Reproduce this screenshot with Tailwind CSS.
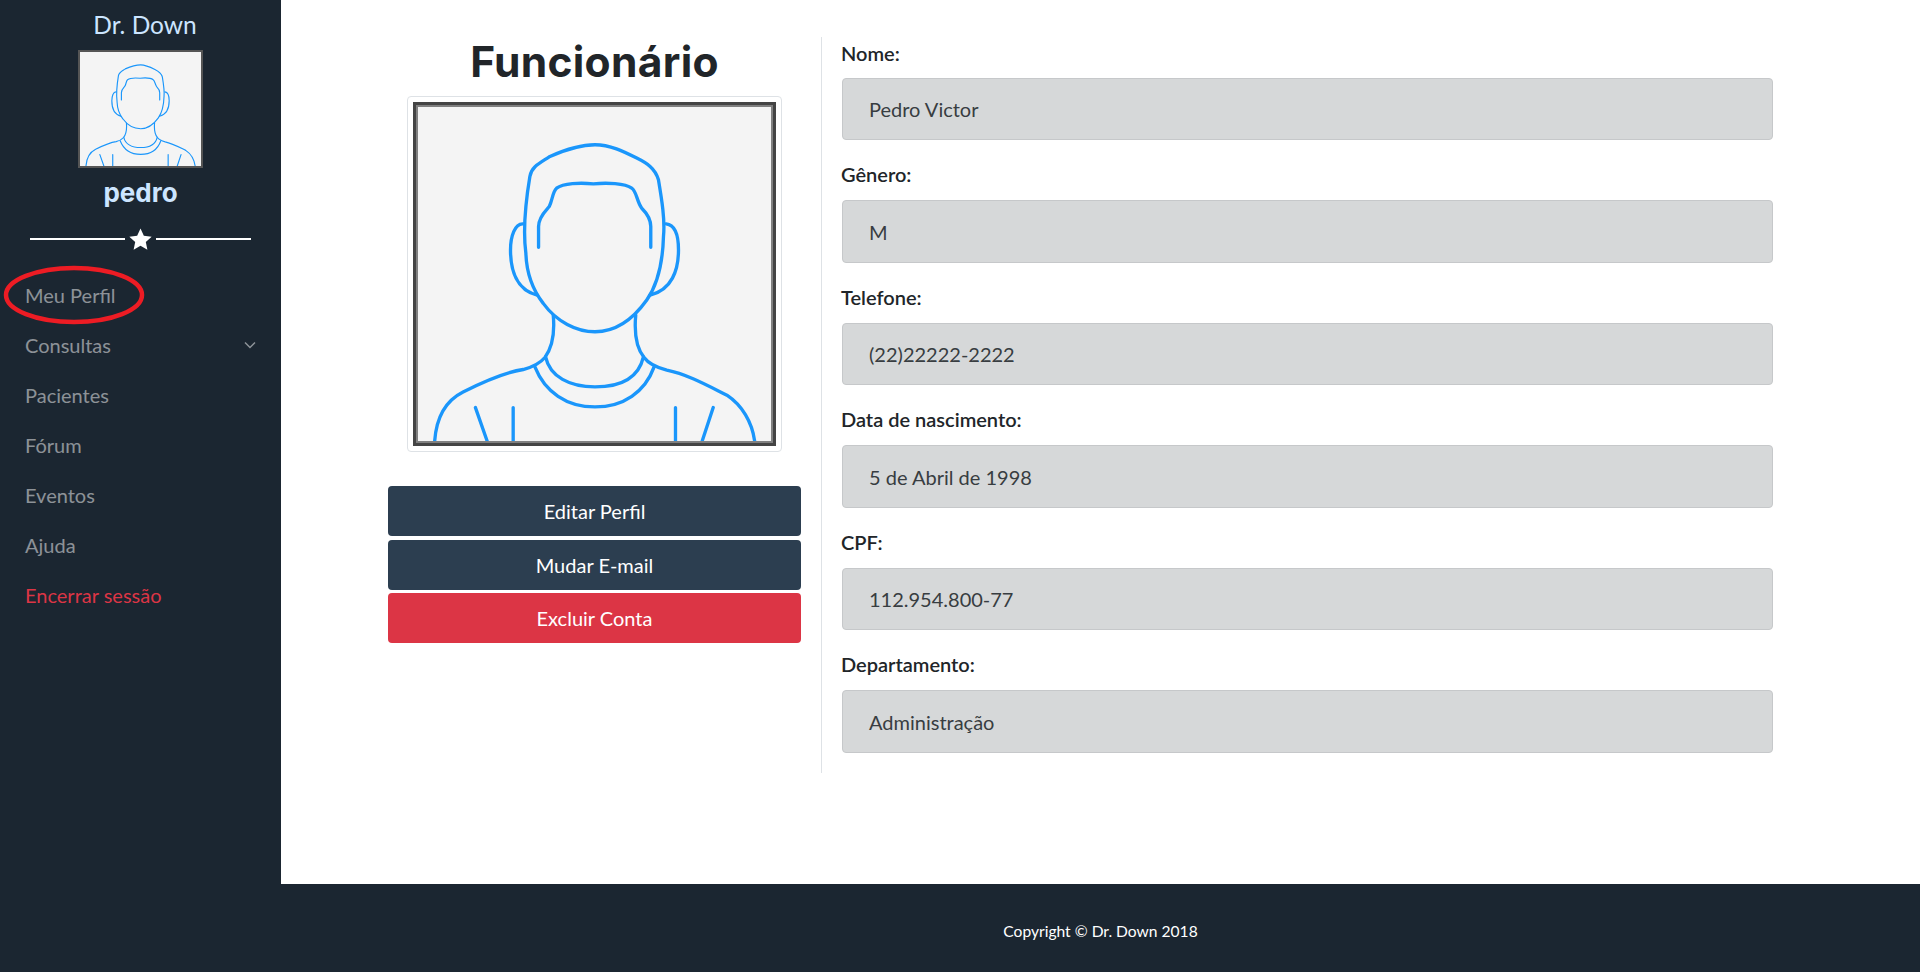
<!DOCTYPE html>
<html lang="pt-BR">
<head>
    <meta charset="UTF-8">
    <title>Dr. Down - Funcionário</title>
    <script src="https://cdn.jsdelivr.net/npm/@tailwindcss/browser@4"></script>
</head>
<body class="bg-white font-['Lato','Liberation_Sans',sans-serif] overflow-hidden">
    <svg class="hidden">
        <symbol id="avatar" viewBox="115 262 1057 1000">
            <g fill="none" stroke="#1a96fb" stroke-width="10" stroke-linecap="round" stroke-linejoin="round">
                <path d="M645 375C690 375 730 395 770 415C800 430 825 445 835 480C845 540 855 600 850 650C848 720 835 790 800 840C750 910 700 935 645 935C590 935 530 905 490 850C455 805 440 760 438 700C430 640 435 560 450 470C455 440 480 430 510 410C560 388 610 375 645 375Z"/>
                <path d="M476 682V620C476 590 500 570 508 560C518 540 518 515 530 505C550 490 600 488 640 492C680 488 735 490 755 505C770 515 770 545 785 565C800 580 812 600 812 620V682"/>
                <path d="M430 612C405 610 392 650 392 690C392 750 410 810 472 825"/>
                <path d="M858 612C885 615 895 650 895 690C895 750 875 810 810 825"/>
                <path d="M520 885C525 940 515 985 495 1012C480 1030 460 1040 430 1048C380 1055 320 1080 250 1115C200 1140 170 1190 165 1262"/>
                <path d="M767 885C762 940 770 985 792 1012C805 1030 830 1042 860 1050C920 1062 980 1095 1040 1125C1085 1155 1115 1205 1123 1262"/>
                <path d="M497 1010C510 1070 570 1100 645 1100C720 1100 775 1075 790 1010"/>
                <path d="M465 1040C495 1115 560 1160 645 1160C730 1160 795 1115 822 1040"/>
                <path d="M287 1162L322 1262M400 1162V1262M886 1162V1262M999 1162L966 1262"/>
            </g>
        </symbol>
    </svg>

    <div class="flex h-[884px]">
        <!-- Sidebar -->
        <aside class="relative w-[281px] shrink-0 bg-[#1b2631]">
            <div class="pt-[9px] pl-[9px] text-center text-[24.5px] leading-[32px] text-[#cce5ff]">Dr. Down</div>
            <div class="ml-[78px] mt-[9px] w-[125px] h-[118px] border-2 border-[#555] bg-[#f4f4f4]">
                <svg class="w-full h-full" preserveAspectRatio="none"><use href="#avatar"/></svg>
            </div>
            <div class="mt-[9px] text-center text-[26px] leading-[32px] font-bold text-[#cce5ff] font-['Inter',sans-serif]">pedro</div>
            <div class="mt-[18px] ml-[30px] w-[221px] h-[24px] flex items-center justify-between">
                <div class="w-[95px] h-[2px] bg-white"></div>
                <svg class="w-[25px] h-[25px] shrink-0" viewBox="0 0 24 24" fill="#fff"><path d="M12 1.5l3.2 6.9 7.5.9-5.6 5.1 1.5 7.4L12 18.1l-6.6 3.7 1.5-7.4L1.3 9.3l7.5-.9z"/></svg>
                <div class="w-[95px] h-[2px] bg-white"></div>
            </div>
            <nav class="mt-[19px] text-[20px] leading-[50px] text-white/50">
                <a class="block pl-[25px]">Meu Perfil</a>
                <a class="flex items-center justify-between pl-[25px] pr-[25px]">
                    Consultas
                    <svg class="w-[12px] h-[8px]" viewBox="0 0 12 8" fill="none" stroke="currentColor" stroke-width="1.5"><path d="M1 1.5l5 5 5-5"/></svg>
                </a>
                <a class="block pl-[25px]">Pacientes</a>
                <a class="block pl-[25px]">Fórum</a>
                <a class="block pl-[25px]">Eventos</a>
                <a class="block pl-[25px]">Ajuda</a>
                <a class="block pl-[25px] text-[#dc3545]">Encerrar sessão</a>
            </nav>
            <!-- red annotation ring -->
            <svg class="absolute left-[3px] top-[265px] w-[142px] h-[60px]" viewBox="0 0 142 60" fill="none"><ellipse cx="71" cy="30" rx="68" ry="27" stroke="#ed1c24" stroke-width="4.5"/></svg>
        </aside>

        <!-- Main -->
        <main class="flex-1 pl-[107px] pt-[37px]">
            <div class="flex items-start">
                <div class="w-[413px]">
                    <h1 class="mt-[1px] text-center text-[42.5px] leading-[48px] tracking-[0.3px] font-bold text-[#212529] font-['Inter',sans-serif]">Funcionário</h1>
                    <div class="mx-auto mt-[10px] w-[375px] h-[356px] p-[5px] rounded border border-[#dee2e6] bg-white">
                        <div class="w-full h-full border-[3px] border-[#444]">
                            <div class="w-full h-full border-2 border-[#808080] bg-[#f4f4f4]">
                                <svg class="w-full h-full" preserveAspectRatio="none"><use href="#avatar"/></svg>
                            </div>
                        </div>
                    </div>
                    <div class="mt-[34px] flex flex-col text-[20px] text-center text-white">
                        <button class="h-[50px] rounded bg-[#2c3e50]">Editar Perfil</button>
                        <button class="h-[50px] mt-[4px] rounded bg-[#2c3e50]">Mudar E-mail</button>
                        <button class="h-[50px] mt-[3px] rounded bg-[#dc3545]">Excluir Conta</button>
                    </div>
                </div>
                <div class="ml-[20px] w-px h-[736px] bg-[#dee2e6]"></div>
                <div class="ml-[20px] w-[931px]">
                    <div class="pt-[2px] ml-[-1px] text-[20px] leading-[28px] font-semibold text-[#212529]">Nome:</div>
                    <div class="mt-[11px] h-[62px] flex items-center pl-[26px] text-[20px] text-[#383d41] bg-[#d6d8d9] border border-[#c6c8ca] rounded">Pedro Victor</div>
                    <div class="mt-[20px] ml-[-1px] text-[20px] leading-[28px] font-semibold text-[#212529]">Gênero:</div>
                    <div class="mt-[12px] h-[63px] flex items-center pl-[26px] text-[20px] text-[#383d41] bg-[#d6d8d9] border border-[#c6c8ca] rounded">M</div>
                    <div class="mt-[20px] ml-[-1px] text-[20px] leading-[28px] font-semibold text-[#212529]">Telefone:</div>
                    <div class="mt-[12px] h-[62px] flex items-center pl-[26px] text-[20px] text-[#383d41] bg-[#d6d8d9] border border-[#c6c8ca] rounded">(22)22222-2222</div>
                    <div class="mt-[20px] ml-[-1px] text-[20px] leading-[28px] font-semibold text-[#212529]">Data de nascimento:</div>
                    <div class="mt-[12px] h-[63px] flex items-center pl-[26px] text-[20px] text-[#383d41] bg-[#d6d8d9] border border-[#c6c8ca] rounded">5 de Abril de 1998</div>
                    <div class="mt-[20px] ml-[-1px] text-[20px] leading-[28px] font-semibold text-[#212529]">CPF:</div>
                    <div class="mt-[12px] h-[62px] flex items-center pl-[26px] text-[20px] text-[#383d41] bg-[#d6d8d9] border border-[#c6c8ca] rounded">112.954.800-77</div>
                    <div class="mt-[20px] ml-[-1px] text-[20px] leading-[28px] font-semibold text-[#212529]">Departamento:</div>
                    <div class="mt-[12px] h-[63px] flex items-center pl-[26px] text-[20px] text-[#383d41] bg-[#d6d8d9] border border-[#c6c8ca] rounded">Administração</div>
                </div>
            </div>
        </main>
    </div>

    <footer class="h-[88px] bg-[#1b2631] flex items-center justify-center text-white text-[15.6px]">
        <span class="ml-[281px] pt-[7px]">Copyright © Dr. Down 2018</span>
    </footer>
</body>
</html>
